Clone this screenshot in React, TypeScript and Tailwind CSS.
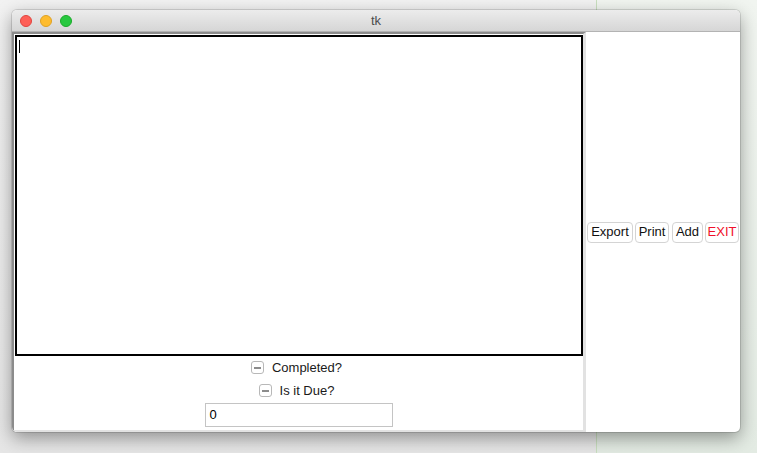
import React from 'react';

const font = { fontFamily: '"Liberation Sans", Arial, sans-serif' };

function Check({ label }: { label: string }) {
    return (
        <div className="flex items-center justify-center gap-[8px] h-[23px] pr-[4px]">
            <div className="w-[13px] h-[13px] rounded-[3px] border border-[#b8b8b8] bg-white flex items-center justify-center">
                <div className="w-[7px] h-[2px] bg-[#8c8c8c]"></div>
            </div>
            <span className="text-[13px] text-[#1a1a1a]">{label}</span>
        </div>
    );
}

function Btn({ label, width, red }: { label: string; width: string; red?: boolean }) {
    return (
        <div className={`${width} h-[21px] shrink-0 flex items-center justify-center rounded-[4px] border border-[#d4d4d4] bg-white text-[13px] ${red ? 'text-[#f0102a]' : 'text-[#111]'}`}>
            {label}
        </div>
    );
}

export default function App() {
    return (
        <div className="relative w-[757px] h-[453px] overflow-hidden flex" style={font}>
            {/* desktop */}
            <div className="w-[596px] h-full bg-gradient-to-b from-[#f2f2f2] to-[#e6e6e6]"></div>
            <div className="w-[1px] h-full bg-[#c9dfbf]"></div>
            <div className="flex-1 h-full bg-gradient-to-b from-[#f1f5f0] to-[#e3ebe3]"></div>

            {/* window */}
            <div className="absolute left-[12px] top-[10px] w-[728px] h-[422px] rounded-[5px] overflow-hidden bg-white flex flex-col shadow-[0_6px_18px_rgba(0,0,0,0.38),0_0_0_1px_rgba(0,0,0,0.12)]">
                <div className="relative h-[22px] shrink-0 bg-gradient-to-b from-[#ececec] to-[#d6d6d6] border-b border-[#b3b3b3] flex items-center justify-center">
                    <div className="absolute left-[8px] top-[5px] flex gap-[8px]">
                        <div className="w-[12px] h-[12px] rounded-full bg-[#fe5f57] border border-[#e0443e]"></div>
                        <div className="w-[12px] h-[12px] rounded-full bg-[#febc2e] border border-[#dea123]"></div>
                        <div className="w-[12px] h-[12px] rounded-full bg-[#28c840] border border-[#1aab29]"></div>
                    </div>
                    <span className="text-[13px] text-[#4d4d4d]">tk</span>
                </div>

                <div className="flex flex-1 min-h-0">
                    {/* left frame */}
                    <div className="w-[574px] shrink-0 h-full flex flex-col border-t-2 border-l-2 border-t-[#8c8c8c] border-l-[#8c8c8c] border-r-[3px] border-b-2 border-r-[#e2e2e2] border-b-[#e2e2e2] bg-white">
                        <div className="mt-[1px] ml-[1px] h-[321px] border-2 border-black bg-white relative">
                            <div className="absolute left-[2px] top-[3px] w-[1px] h-[13px] bg-black"></div>
                        </div>
                        <Check label="Completed?" />
                        <Check label="Is it Due?" />
                        <div className="flex justify-center mt-[1px]">
                            <div className="w-[188px] h-[24px] border border-[#c4c4c4] flex items-center pl-[4px] text-[13px] text-black">0</div>
                        </div>
                    </div>

                    {/* right panel */}
                    <div className="flex-1 min-w-0 flex items-center pl-[1px]">
                        <Btn label="Export" width="w-[46px]" />
                        <div className="w-[2px]"></div>
                        <Btn label="Print" width="w-[34px]" />
                        <div className="w-[3px]"></div>
                        <Btn label="Add" width="w-[31px]" />
                        <div className="w-[2px]"></div>
                        <Btn label="EXIT" width="w-[34px]" red />
                    </div>
                </div>
            </div>
        </div>
    );
}
